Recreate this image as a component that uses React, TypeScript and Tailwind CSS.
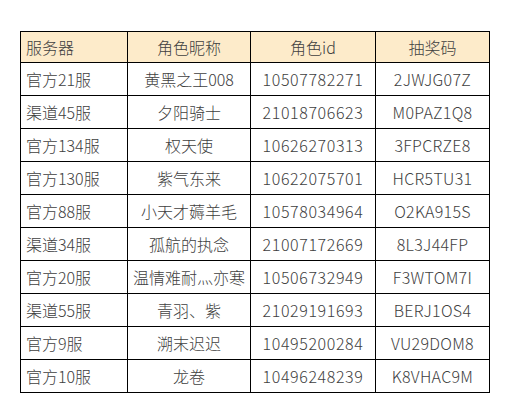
import React from "react";

const rows: [string, string, string, string][] = [
  ["官方21服", "黄黑之王008", "10507782271", "2JWJG07Z"],
  ["渠道45服", "夕阳骑士", "21018706623", "M0PAZ1Q8"],
  ["官方134服", "权天使", "10626270313", "3FPCRZE8"],
  ["官方130服", "紫气东来", "10622075701", "HCR5TU31"],
  ["官方88服", "小天才薅羊毛", "10578034964", "O2KA915S"],
  ["渠道34服", "孤航的执念", "21007172669", "8L3J44FP"],
  ["官方20服", "温情难耐灬亦寒", "10506732949", "F3WTOM7I"],
  ["渠道55服", "青羽、紫", "21029191693", "BERJ1OS4"],
  ["官方9服", "溯末迟迟", "10495200284", "VU29DOM8"],
  ["官方10服", "龙卷", "10496248239", "K8VHAC9M"],
];

export default function App() {
  return (
    <div
      className="w-[509px] h-[411px] bg-white pt-[31px] pl-[20px] text-[#404040] text-[16px] font-light"
      style={{ fontFamily: '"Microsoft YaHei", "Noto Sans CJK SC", "Noto Sans", sans-serif' }}
    >
      <table className="border-collapse table-fixed w-[469px]">
        <colgroup>
          <col className="w-[107px]" />
          <col className="w-[123px]" />
          <col className="w-[125px]" />
          <col className="w-[114px]" />
        </colgroup>
        <thead>
          <tr className="bg-[#fdebca] h-[31px]">
            <th className="border border-black font-light text-left pl-[5px] p-0 leading-none">服务器</th>
            <th className="border border-black font-light text-center p-0 leading-none">角色昵称</th>
            <th className="border border-black font-light text-center p-0 leading-none">角色id</th>
            <th className="border border-black font-light text-center p-0 leading-none">抽奖码</th>
          </tr>
        </thead>
        <tbody>
          {rows.map((r, i) => (
            <tr key={i} className="h-[33px]">
              <td className="border border-black text-left pl-[5px] p-0 leading-none whitespace-nowrap">{r[0]}</td>
              <td className="border border-black text-center p-0 leading-none whitespace-nowrap">{r[1]}</td>
              <td className="border border-black text-center p-0 leading-none whitespace-nowrap tracking-[0.6px]">{r[2]}</td>
              <td className="border border-black text-center p-0 leading-none whitespace-nowrap tracking-[0.3px]">{r[3]}</td>
            </tr>
          ))}
        </tbody>
      </table>
    </div>
  );
}
